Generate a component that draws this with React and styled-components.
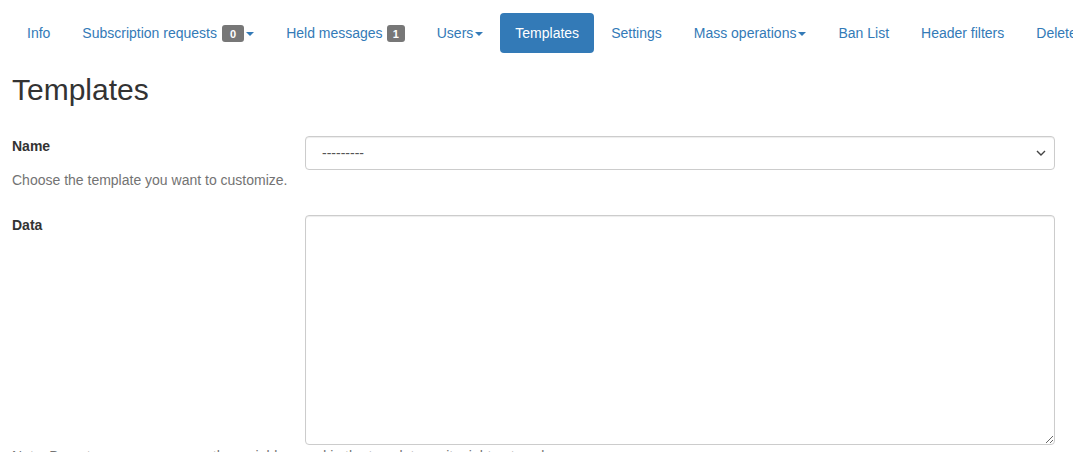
import styled, { createGlobalStyle } from "styled-components";

const GlobalStyle = createGlobalStyle`
  * {
    box-sizing: border-box;
  }
  body {
    margin: 0;
    background: #fff;
    color: #333;
    font-family: "Liberation Sans", Arial, sans-serif;
    font-size: 14px;
    line-height: 1.42857;
    overflow: hidden;
  }
`;

const Page = styled.div`
  padding: 13px 12px 0 12px;
`;

const Pills = styled.ul`
  display: flex;
  flex-flow: row nowrap;
  gap: 2px;
  margin: 0;
  padding: 0;
  list-style: none;
  white-space: nowrap;
`;

const Pill = styled.li`
  display: flex;
  align-items: center;
  height: 40px;
  padding: 1px 15px 0 15px;
  border-radius: 4px;
  color: ${(p) => (p.$active ? "#fff" : "#337ab7")};
  background-color: ${(p) => (p.$active ? "#337ab7" : "transparent")};
  cursor: pointer;
`;

const Count = styled.span`
  display: inline-block;
  margin-left: ${(p) => (p.$narrow ? 4 : 5)}px;
  padding: 2px ${(p) => (p.$narrow ? 6 : 8)}px 1px;
  border-radius: 3px;
  background-color: #777;
  color: #fff;
  font-size: 11px;
  font-weight: bold;
  line-height: 14px;
`;

const Caret = styled.span`
  display: inline-block;
  width: 0;
  height: 0;
  margin-left: 2px;
  border-top: 4px solid;
  border-left: 4px solid transparent;
  border-right: 4px solid transparent;
`;

const Title = styled.h2`
  margin: 20px 0 10px 0;
  font-size: 30px;
  font-weight: 500;
  line-height: 1.1;
  color: #333;
`;

const FormRow = styled.div`
  display: grid;
  grid-template-columns: 293px 750px;
  margin-top: ${(p) => p.$top || "0"}px;
  margin-bottom: 15px;
`;

const LabelCol = styled.div`
  padding-top: 0;
`;

const FieldLabel = styled.label`
  display: block;
  font-weight: bold;
  line-height: 20px;
`;

const Help = styled.p`
  margin: 14px 0 10px 0;
  color: #737373;
  line-height: 20px;
  white-space: nowrap;
`;

const SelectWrap = styled.div`
  position: relative;
  height: 34px;
`;

const Select = styled.select`
  width: 100%;
  height: 34px;
  padding: 6px 30px 6px 16px;
  appearance: none;
  border: 1px solid #ccc;
  border-radius: 4px;
  background-color: #fff;
  box-shadow: inset 0 1px 1px rgba(0, 0, 0, 0.075);
  color: #555;
  font-family: "Liberation Sans", Arial, sans-serif;
  font-size: 14px;
`;

const Chevron = styled.svg`
  position: absolute;
  right: 9px;
  top: 14px;
  pointer-events: none;
`;

const TextArea = styled.textarea`
  display: block;
  width: 100%;
  height: 230px;
  padding: 6px 12px;
  border: 1px solid #ccc;
  border-radius: 4px;
  box-shadow: inset 0 1px 1px rgba(0, 0, 0, 0.075);
  font-family: "Liberation Sans", Arial, sans-serif;
  font-size: 14px;
  color: #555;
`;

const Note = styled.p`
  margin: -14px 0 0 0;
  color: #737373;
  line-height: 20px;
  white-space: nowrap;
`;

const navItems = [
  { label: "Info" },
  { label: "Subscription requests", count: 0, caret: true },
  { label: "Held messages", count: 1, narrow: true },
  { label: "Users", caret: true },
  { label: "Templates", active: true },
  { label: "Settings" },
  { label: "Mass operations", caret: true },
  { label: "Ban List" },
  { label: "Header filters" },
  { label: "Delete list" },
];

const App = () => {
  return (
    <Page>
      <GlobalStyle />
      <Pills>
        {navItems.map((item) => (
          <Pill key={item.label} $active={item.active}>
            {item.label}
            {item.count !== undefined && (
              <Count $narrow={item.narrow}>{item.count}</Count>
            )}
            {item.caret && <Caret />}
          </Pill>
        ))}
      </Pills>

      <Title>Templates</Title>

      <FormRow $top={30}>
        <LabelCol>
          <FieldLabel>Name</FieldLabel>
          <Help>Choose the template you want to customize.</Help>
        </LabelCol>
        <SelectWrap>
          <Select defaultValue="">
            <option value="">---------</option>
          </Select>
          <Chevron width="10" height="6" viewBox="0 0 10 6">
            <path d="M1 1l4 4 4-4" fill="none" stroke="#444" strokeWidth="1.4" />
          </Chevron>
        </SelectWrap>
      </FormRow>

      <FormRow>
        <LabelCol>
          <FieldLabel>Data</FieldLabel>
        </LabelCol>
        <TextArea />
      </FormRow>

      <Note>
        Note: Do not remove or rename the variables used in the template, or it might not work.
      </Note>
    </Page>
  );
};

export default App;
